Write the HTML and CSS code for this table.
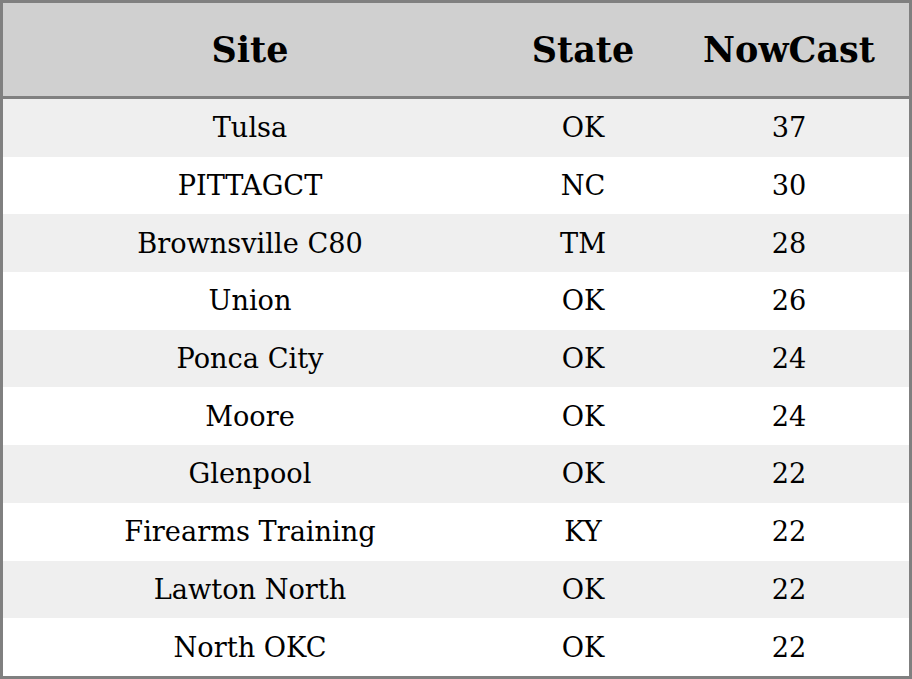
FILE: index.html
```html
<!DOCTYPE html>
<html>
<head>
<meta charset="utf-8">
<link rel="stylesheet" href="styles.css">
</head>
<body>
<table class="aq">
  <colgroup><col class="c-site"><col class="c-state"><col class="c-now"></colgroup>
  <thead>
    <tr><th>Site</th><th>State</th><th>NowCast</th></tr>
  </thead>
  <tbody>
    <tr><td>Tulsa</td><td>OK</td><td>37</td></tr>
    <tr><td>PITTAGCT</td><td>NC</td><td>30</td></tr>
    <tr><td>Brownsville C80</td><td>TM</td><td>28</td></tr>
    <tr><td>Union</td><td>OK</td><td>26</td></tr>
    <tr><td>Ponca City</td><td>OK</td><td>24</td></tr>
    <tr><td>Moore</td><td>OK</td><td>24</td></tr>
    <tr><td>Glenpool</td><td>OK</td><td>22</td></tr>
    <tr><td>Firearms Training</td><td>KY</td><td>22</td></tr>
    <tr><td>Lawton North</td><td>OK</td><td>22</td></tr>
    <tr><td>North OKC</td><td>OK</td><td>22</td></tr>
  </tbody>
</table>
</body>
</html>
```
FILE: styles.css
```css
html, body { margin: 0; padding: 0; background: #fff; }
.aq {
  width: 912px;
  height: 679px;
  border-collapse: separate;
  border-spacing: 0;
  border: 3px solid #808080;
  box-sizing: border-box;
  font-family: "DejaVu Serif", serif;
  color: #000;
  table-layout: fixed;
}
.c-site { width: 494px; }
.c-state { width: 172px; }
.c-now { width: 240px; }
.aq th {
  height: 93px;
  background: #d0d0d0;
  font-size: 35px;
  font-weight: bold;
  text-align: center;
  border-bottom: 3px solid #808080;
  padding: 0;
}
.aq td {
  height: 57.7px;
  font-size: 27.2px;
  text-align: center;
  padding: 0;
}
.aq tbody tr:nth-child(odd) td { background: #efefef; }
.aq tbody tr:nth-child(even) td { background: #fff; }
```
